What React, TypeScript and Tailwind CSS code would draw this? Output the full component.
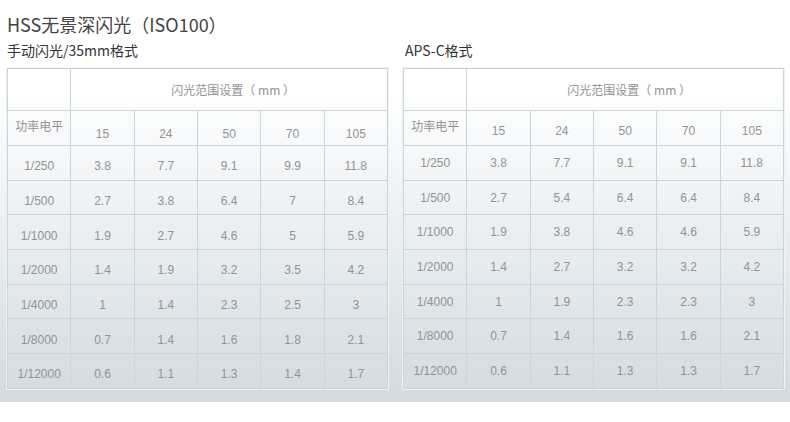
const FOCALS = ["15", "24", "50", "70", "105"];

const FULL_FRAME = [
  ["1/250", "3.8", "7.7", "9.1", "9.9", "11.8"],
  ["1/500", "2.7", "3.8", "6.4", "7", "8.4"],
  ["1/1000", "1.9", "2.7", "4.6", "5", "5.9"],
  ["1/2000", "1.4", "1.9", "3.2", "3.5", "4.2"],
  ["1/4000", "1", "1.4", "2.3", "2.5", "3"],
  ["1/8000", "0.7", "1.4", "1.6", "1.8", "2.1"],
  ["1/12000", "0.6", "1.1", "1.3", "1.4", "1.7"],
];

const APS_C = [
  ["1/250", "3.8", "7.7", "9.1", "9.1", "11.8"],
  ["1/500", "2.7", "5.4", "6.4", "6.4", "8.4"],
  ["1/1000", "1.9", "3.8", "4.6", "4.6", "5.9"],
  ["1/2000", "1.4", "2.7", "3.2", "3.2", "4.2"],
  ["1/4000", "1", "1.9", "2.3", "2.3", "3"],
  ["1/8000", "0.7", "1.4", "1.6", "1.6", "2.1"],
  ["1/12000", "0.6", "1.1", "1.3", "1.3", "1.7"],
];

const cjk = "font-['Noto_Sans_CJK_SC','Noto_Sans',sans-serif]";
const num = "font-['Liberation_Sans','Noto_Sans_CJK_SC',sans-serif]";
const cell = "border border-[#cad5d8] text-center p-0";

function FlashTable({ rows, low }: { rows: string[][]; low: boolean }) {
  return (
    <table className="w-[381px] table-fixed border-collapse text-[12px] text-[#939393] outline outline-1 outline-[#eef2f3]">
      <tbody>
        <tr className="h-[42px]">
          <td className={cell}></td>
          <td colSpan={5} className={`${cell} ${cjk} pl-[8px]`}>
            闪光范围设置（ mm ）
          </td>
        </tr>
        <tr className="h-[35px]">
          <td className={`${cell} ${cjk} align-top pt-[6px]`}>功率电平</td>
          {FOCALS.map((f) => (
            <td
              key={f}
              className={`${cell} ${num} ${low ? "pt-[12px]" : "pt-[6px]"}`}
            >
              {f}
            </td>
          ))}
        </tr>
        {rows.map((r) => (
          <tr key={r[0]} className="h-[34.7px]">
            {r.map((v, i) => (
              <td
                key={i}
                className={`${cell} ${num} ${low ? "pt-[7px]" : "pt-0"}`}
              >
                {v}
              </td>
            ))}
          </tr>
        ))}
      </tbody>
    </table>
  );
}

export default function App() {
  return (
    <div className="w-[790px] h-[422px] bg-white overflow-hidden">
      <div className="h-[402px] bg-[linear-gradient(to_bottom,#ffffff_22%,#d2dbe1_100%)] px-[7px]">
        <h1
          className={`${cjk} text-[18px] leading-none text-[#444] pt-[15px] font-normal`}
        >
          HSS无景深闪光（ISO100）
        </h1>
        <div className="flex gap-[15px] mt-[10px]">
          <div>
            <div className={`${cjk} text-[14px] leading-none text-[#333] mb-[11px]`}>
              手动闪光/35mm格式
            </div>
            <FlashTable rows={FULL_FRAME} low={true} />
          </div>
          <div>
            <div className={`${cjk} text-[14px] leading-none text-[#333] mb-[11px] pl-[2px]`}>
              APS-C格式
            </div>
            <FlashTable rows={APS_C} low={false} />
          </div>
        </div>
      </div>
    </div>
  );
}
